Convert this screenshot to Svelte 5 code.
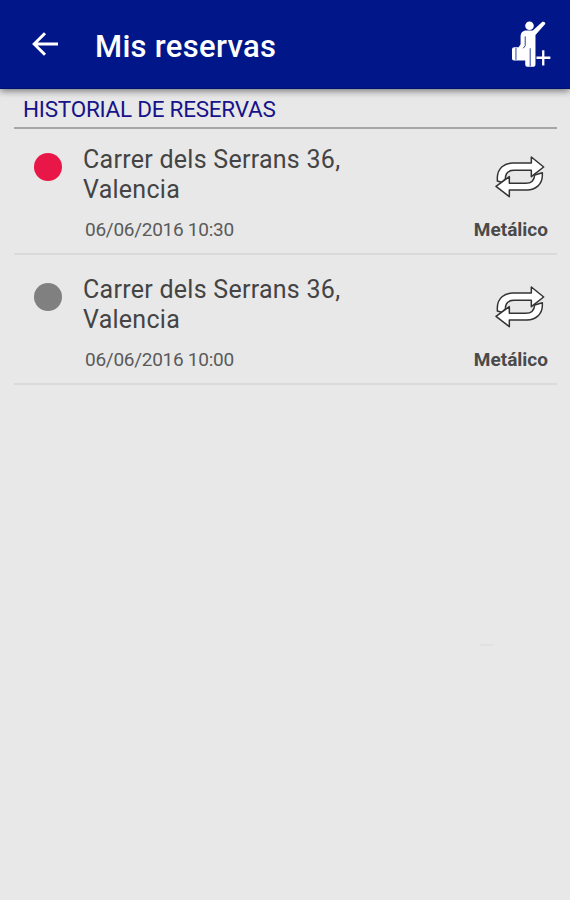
<script>
  const bookings = [
    { address: 'Carrer dels Serrans 36, Valencia', date: '06/06/2016 10:30', payment: 'Metálico', active: true },
    { address: 'Carrer dels Serrans 36, Valencia', date: '06/06/2016 10:00', payment: 'Metálico', active: false }
  ]
</script>

<div class="screen">
  <header>
    <svg class="back" viewBox="0 0 26 24">
      <path d="M26 12H2M13 1.2L2.2 12L13 22.8" fill="none" stroke="#fff" stroke-width="3" />
    </svg>
    <h1>Mis reservas</h1>
    <svg class="hail" viewBox="60 30 130 150">
      <g fill="#fff">
        <circle cx="119" cy="50" r="13" />
        <path d="M106 64H129L158 38Q166 36 167 44L137 78V166Q137 174 129 174H112Q106 174 106 166V155H72Q66 155 66 149V122Q66 115 73 115H86L92 106V80Q93 67 106 64Z" />
        <path d="M157 124H164V143H182V150H164V170H157V150H140V143H157Z" />
      </g>
      <path d="M106 82V110L100 118M121 118V172M78 117V153" fill="none" stroke="#001689" stroke-width="2.5" />
    </svg>
  </header>

  <main>
    <h2>HISTORIAL DE RESERVAS</h2>
    {#each bookings as booking}
      <article>
        <span class="dot" class:active={booking.active}></span>
        <div class="info">
          <p class="address">{booking.address}</p>
          <p class="date">{booking.date}</p>
        </div>
        <div class="side">
          <svg class="loop" viewBox="44 30 150 132">
            <g fill="#fff" stroke="#333" stroke-width="4.5" stroke-linejoin="round">
              <path d="M51 108V97C52 70 72 54 98 54H153V36L190 66L153 95V76H101C84 76 75 86 75 102L64 112Z" />
              <path d="M186 83V93C185 118 166 135 140 135H87V155L47 124L87 95V115H136C153 115 162 106 163 90Z" />
            </g>
          </svg>
          <p class="payment">{booking.payment}</p>
        </div>
      </article>
    {/each}
    <i class="handle"></i>
  </main>
</div>

<style>
  :global(body) {
    margin: 0;
  }
  .screen {
    height: 900px;
    background: #e8e8e8;
    font-family: Roboto, sans-serif;
    overflow: hidden;
  }
  h1, h2, p {
    margin: 0;
  }
  header {
    position: relative;
    display: flex;
    align-items: center;
    box-sizing: border-box;
    height: 89px;
    padding: 0 17px 0 32px;
    background: #001689;
    border-bottom: 1px solid #001070;
    box-shadow: 0 2px 7px rgba(0, 0, 0, 0.5);
  }
  .back {
    width: 26px;
    height: 24px;
  }
  h1 {
    margin-left: 37px;
    padding-top: 4px;
    color: #fff;
    font-size: 31px;
    font-weight: 500;
    letter-spacing: 0.3px;
    white-space: nowrap;
  }
  .hail {
    width: 43px;
    height: 50px;
    margin-left: auto;
  }
  main {
    padding: 0 13px 0 14px;
  }
  h2 {
    box-sizing: border-box;
    height: 40px;
    padding: 7px 9px 0;
    border-bottom: 2px solid #a6a6a6;
    color: #17138a;
    font-size: 22.5px;
    font-weight: 400;
    letter-spacing: -0.25px;
    line-height: 27px;
    white-space: nowrap;
  }
  article {
    display: flex;
    box-sizing: border-box;
    height: 130px;
    padding-top: 4px;
    border-bottom: 2px solid #dadada;
  }
  article:first-of-type {
    height: 126px;
    padding-top: 0;
  }
  .dot {
    width: 28px;
    height: 28px;
    margin: 24px 21px 0 20px;
    border-radius: 50%;
    background: #808080;
  }
  .dot.active {
    background: #e91748;
  }
  .info {
    width: 280px;
    padding-top: 16px;
  }
  .address {
    color: #444;
    font-size: 25px;
    letter-spacing: 0.27px;
    line-height: 30px;
  }
  .date {
    margin-top: 13px;
    padding-left: 2px;
    color: #5a5a5a;
    font-size: 19px;
    letter-spacing: -0.27px;
    line-height: 24px;
  }
  .side {
    display: flex;
    flex-direction: column;
    align-items: flex-end;
    margin-left: auto;
    padding-top: 26px;
  }
  .loop {
    width: 50px;
    height: 44px;
    margin-right: 12px;
  }
  .payment {
    margin: 19px 9px 0 0;
    color: #4a4a4a;
    font-size: 19px;
    font-weight: 700;
    line-height: 24px;
  }
  .handle {
    display: block;
    width: 13px;
    height: 2px;
    margin: 259px 0 0 466px;
    background: #e1e1e1;
  }
</style>
